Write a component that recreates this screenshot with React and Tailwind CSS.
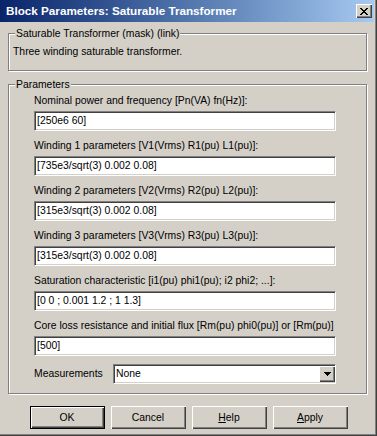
import React from "react";

const bevel =
  "shadow-[inset_1px_1px_0_#fff,inset_-1px_-1px_0_#404040,inset_-2px_-2px_0_#808080]";
const sunken =
  "border border-t-[#808080] border-l-[#808080] border-r-white border-b-white shadow-[inset_1px_1px_0_#404040,inset_-1px_-1px_0_#d4d0c8]";

function Group({ label, className, children }) {
  return (
    <div
      className={`relative border border-[#808080] shadow-[inset_1px_1px_0_#fff,1px_1px_0_#fff] ${className}`}
    >
      <span className="absolute left-[6px] top-[-7px] bg-[#d4d0c8] px-[1px] leading-[13px]">
        {label}
      </span>
      {children}
    </div>
  );
}

function Field({ label, value }) {
  return (
    <div className="flex flex-col">
      <div className="h-[14px] leading-[14px] whitespace-nowrap">{label}</div>
      <div className={`mt-[3px] h-[20px] bg-white flex items-center pl-[2px] ${sunken}`}>
        {value}
      </div>
    </div>
  );
}

function Button({ children, isDefault }) {
  return (
    <div
      className={`w-[75px] h-[23px] flex items-center justify-center ${
        isDefault ? "border border-black" : ""
      } ${bevel}`}
    >
      {children}
    </div>
  );
}

const params = [
  ["Nominal power and frequency [Pn(VA) fn(Hz)]:", "[250e6 60]"],
  ["Winding 1 parameters [V1(Vrms) R1(pu) L1(pu)]:", "[735e3/sqrt(3) 0.002 0.08]"],
  ["Winding 2 parameters [V2(Vrms) R2(pu) L2(pu)]:", "[315e3/sqrt(3) 0.002 0.08]"],
  ["Winding 3 parameters [V3(Vrms) R3(pu) L3(pu)]:", "[315e3/sqrt(3) 0.002 0.08]"],
  ["Saturation characteristic [i1(pu) phi1(pu); i2 phi2; ...]:", "[0 0 ; 0.001 1.2 ; 1 1.3]"],
  ["Core loss resistance and initial flux [Rm(pu) phi0(pu)] or [Rm(pu)]", "[500]"],
];

export default function App() {
  return (
    <div className="w-[377px] h-[436px] bg-[#d4d0c8] flex flex-col text-[10.4px] text-black font-['Liberation_Sans',Arial,sans-serif] shadow-[inset_-1px_-1px_0_#404040,inset_-2px_-2px_0_#808080]">
      {/* title bar */}
      <div className="h-[22px] mr-[3px] flex items-center bg-linear-to-r from-[#0a246a] to-[#a6caf0] pl-[6px] pr-[2px]">
        <span className="flex-1 text-white font-bold text-[11.7px] whitespace-nowrap">
          Block Parameters: Saturable Transformer
        </span>
        <div className={`w-[16px] h-[14px] bg-[#d4d0c8] flex items-center justify-center ${bevel}`}>
          <svg width="8" height="7" viewBox="0 0 8 7" shapeRendering="crispEdges">
            <path d="M0 0h2v1h-2zM6 0h2v1h-2zM1 1h2v1h-2zM5 1h2v1h-2zM2 2h4v1h-4zM3 3h2v1h-2zM2 4h4v1h-4zM1 5h2v1h-2zM5 5h2v1h-2zM0 6h2v1h-2zM6 6h2v1h-2z" fill="#000" />
          </svg>
        </div>
      </div>

      <div className="flex flex-col pl-[8px] pr-[10px]">
        <Group label="Saturable Transformer (mask) (link)" className="mt-[11px] pt-[11px] pb-[11px] pl-[4px]">
          <div className="h-[14px] leading-[14px]">Three winding saturable transformer.</div>
        </Group>

        <Group label="Parameters" className="mt-[13px] pt-[9px] pb-[9px] pl-[25px] pr-[30px]">
          <div className="flex flex-col gap-[8px]">
            {params.map(([label, value]) => (
              <Field key={label} label={label} value={value} />
            ))}
            <div className="flex items-center">
              <div className="w-[79px]">Measurements</div>
              <div className={`flex-1 h-[20px] bg-white flex items-center pl-[2px] ${sunken}`}>
                <span className="flex-1">None</span>
                <div className={`w-[16px] h-[16px] bg-[#d4d0c8] flex items-center justify-center ${bevel}`}>
                  <svg width="7" height="4" viewBox="0 0 7 4" shapeRendering="crispEdges">
                    <path d="M0 0h7v1h-7zM1 1h5v1h-5zM2 2h3v1h-3zM3 3h1v1h-1z" fill="#000" />
                  </svg>
                </div>
              </div>
            </div>
          </div>
        </Group>
      </div>

      <div className="mt-[12px] flex justify-center gap-[6px]">
        <Button isDefault>OK</Button>
        <Button>Cancel</Button>
        <Button>
          <span><span className="underline">H</span>elp</span>
        </Button>
        <Button>
          <span><span className="underline">A</span>pply</span>
        </Button>
      </div>
    </div>
  );
}
